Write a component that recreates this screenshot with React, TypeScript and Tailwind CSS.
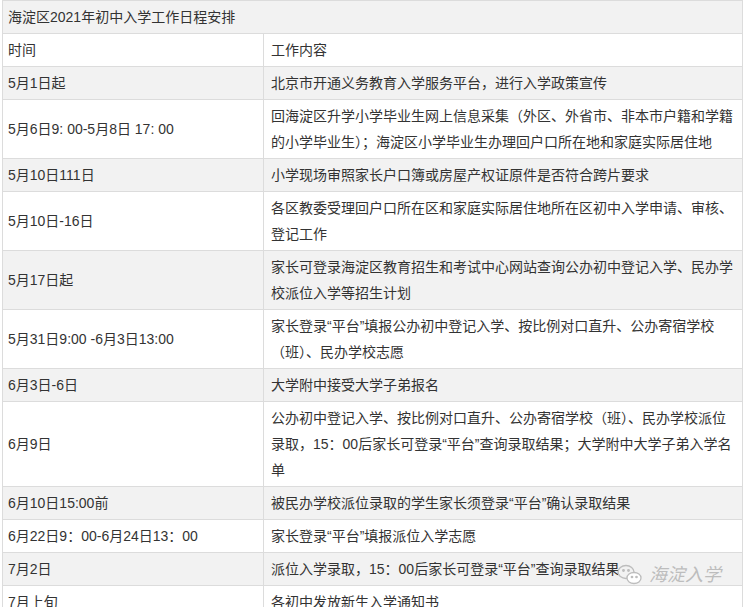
const rows: [string, string][] = [
  ["时间", "工作内容"],
  ["5月1日起", "北京市开通义务教育入学服务平台，进行入学政策宣传"],
  ["5月6日9: 00-5月8日 17: 00", "回海淀区升学小学毕业生网上信息采集（外区、外省市、非本市户籍和学籍的小学毕业生）；海淀区小学毕业生办理回户口所在地和家庭实际居住地"],
  ["5月10日111日", "小学现场审照家长户口簿或房屋产权证原件是否符合跨片要求"],
  ["5月10日-16日", "各区教委受理回户口所在区和家庭实际居住地所在区初中入学申请、审核、登记工作"],
  ["5月17日起", "家长可登录海淀区教育招生和考试中心网站查询公办初中登记入学、民办学校派位入学等招生计划"],
  ["5月31日9:00 -6月3日13:00", "家长登录“平台”填报公办初中登记入学、按比例对口直升、公办寄宿学校（班）、民办学校志愿"],
  ["6月3日-6日", "大学附中接受大学子弟报名"],
  ["6月9日", "公办初中登记入学、按比例对口直升、公办寄宿学校（班）、民办学校派位录取，15：00后家长可登录“平台”查询录取结果；大学附中大学子弟入学名单"],
  ["6月10日15:00前", "被民办学校派位录取的学生家长须登录“平台”确认录取结果"],
  ["6月22日9：00-6月24日13：00", "家长登录“平台”填报派位入学志愿"],
  ["7月2日", "派位入学录取，15：00后家长可登录“平台”查询录取结果"],
  ["7月上旬", "各初中发放新生入学通知书"],
];

export default function App() {
  return (
    <div className="relative w-[746px] h-[607px] overflow-hidden bg-white px-[2px] text-[14px] leading-[26px] text-[#333]" style={{ fontFamily: '"Liberation Sans", "Noto Sans CJK SC", sans-serif' }}>
      <table className="w-[741px] border-collapse table-fixed">
        <colgroup>
          <col className="w-[261px]" />
          <col />
        </colgroup>
        <tbody>
          <tr className="bg-[#f2f2f2]">
            <td colSpan={2} className="border border-[#dcdcdc] px-[5px] py-[3px]">海淀区2021年初中入学工作日程安排</td>
          </tr>
          {rows.map(([a, b], i) => (
            <tr key={i} className={i % 2 === 1 ? "bg-[#f2f2f2]" : "bg-white"}>
              <td className="border border-[#dcdcdc] px-[5px] py-[3px] align-middle">{a}</td>
              <td className="border border-[#dcdcdc] px-[7px] py-[3px] align-middle">{b}</td>
            </tr>
          ))}
        </tbody>
      </table>
      <div className="absolute left-[617px] top-[562px] flex items-center gap-[6px] text-[#bdbdbd] text-[18px] italic">
        <svg width="26" height="22" viewBox="0 0 26 22" fill="none" stroke="#bdbdbd" strokeWidth="1.3">
          <ellipse cx="9" cy="8" rx="8" ry="6.5" />
          <ellipse cx="17" cy="14" rx="7" ry="5.5" fill="white" />
          <circle cx="6.5" cy="6.5" r="0.8" fill="#bdbdbd" />
          <circle cx="11.5" cy="6.5" r="0.8" fill="#bdbdbd" />
          <circle cx="15" cy="13" r="0.7" fill="#bdbdbd" />
          <circle cx="19.5" cy="13" r="0.7" fill="#bdbdbd" />
        </svg>
        <span>海淀入学</span>
      </div>
    </div>
  );
}
